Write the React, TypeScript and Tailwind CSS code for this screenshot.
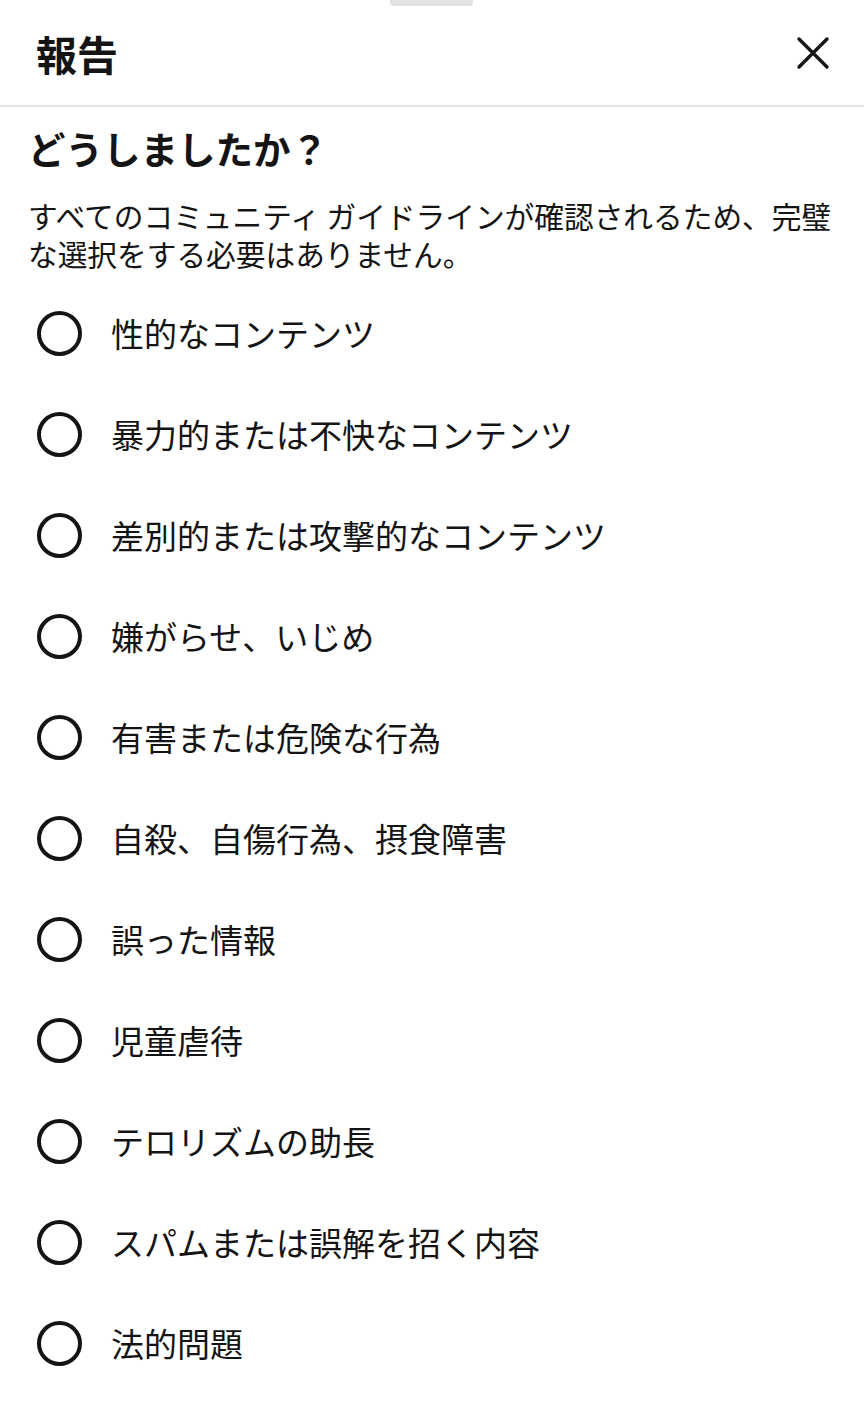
import React, { useState } from "react";

const reasons = [
  "性的なコンテンツ",
  "暴力的または不快なコンテンツ",
  "差別的または攻撃的なコンテンツ",
  "嫌がらせ、いじめ",
  "有害または危険な行為",
  "自殺、自傷行為、摂食障害",
  "誤った情報",
  "児童虐待",
  "テロリズムの助長",
  "スパムまたは誤解を招く内容",
  "法的問題",
];

const App: React.FC = () => {
  const [selected, setSelected] = useState<string | null>(null);

  return (
    <div
      className="w-[864px] min-h-[1427px] bg-white text-[#141414]"
      style={{ fontFamily: '"Noto Sans CJK JP", "Noto Sans", sans-serif' }}
    >
      <div className="relative h-[107px] flex items-center justify-between pl-[36px] pr-[34px] border-b-2 border-[#e3e3e3]">
        <div className="absolute top-0 left-[390px] w-[83px] h-[6px] bg-[#e2e2e2] rounded-b-sm" />
        <h1 className="text-[41px] leading-none font-bold mt-[2px]">報告</h1>
        <button className="w-[34px] h-[34px] flex items-center justify-center" aria-label="閉じる">
          <svg width="34" height="34" viewBox="0 0 34 34" fill="none">
            <path d="M3 3 L31 31 M31 3 L3 31" stroke="#141414" strokeWidth="3.4" strokeLinecap="round" />
          </svg>
        </button>
      </div>

      <div className="px-[28px]">
        <h2 className="mt-[19px] text-[37.5px] leading-[44px] font-bold">どうしましたか？</h2>
        <p className="mt-[27px] text-[29.7px] leading-[38px]">
          すべてのコミュニティ ガイドラインが確認されるため、完璧な選択をする必要はありません。
        </p>
      </div>

      <div className="mt-[10px]">
        {reasons.map((r) => (
          <label
            key={r}
            className="h-[101px] flex items-center pl-[37px] cursor-pointer"
            onClick={() => setSelected(r)}
          >
            <span className="w-[45px] h-[45px] rounded-full border-[4px] border-[#141414] flex items-center justify-center shrink-0">
              {selected === r && <span className="w-[22px] h-[22px] rounded-full bg-[#141414]" />}
            </span>
            <span className="ml-[29px] text-[33px] leading-none">{r}</span>
          </label>
        ))}
      </div>
    </div>
  );
};

export default App;
